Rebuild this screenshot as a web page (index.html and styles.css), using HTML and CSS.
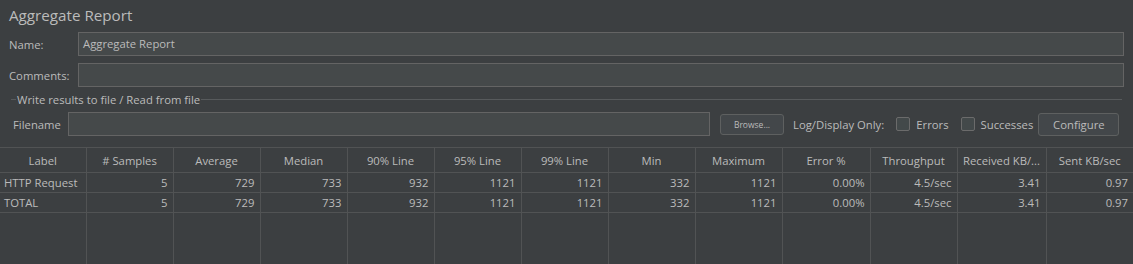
FILE: index.html
```html
<!DOCTYPE html>
<html lang="en">
<head>
  <meta charset="UTF-8" />
  <title>Aggregate Report</title>
  <link rel="stylesheet" href="styles.css">
</head>
<body>
  <div class="title">Aggregate Report</div>

  <div class="field-row">
    <label class="field-label">Name:</label>
    <div class="text-field">Aggregate Report</div>
  </div>
  <div class="field-row">
    <label class="field-label">Comments:</label>
    <div class="text-field"></div>
  </div>

  <div class="group">
    <div class="group-title"><span>Write results to file / Read from file</span></div>
    <div class="file-row">
      <label class="file-label">Filename</label>
      <div class="text-field file-field"></div>
      <button class="btn btn-small">Browse...</button>
      <span class="log-label">Log/Display Only:</span>
      <span class="check"></span><span class="check-label">Errors</span>
      <span class="check"></span><span class="check-label">Successes</span>
      <button class="btn btn-configure">Configure</button>
    </div>
  </div>

  <table class="report">
    <colgroup>
      <col style="width:86px"><col style="width:87px"><col style="width:87px"><col style="width:87px">
      <col style="width:87px"><col style="width:87px"><col style="width:87px"><col style="width:87px">
      <col style="width:87px"><col style="width:88px"><col style="width:87px"><col style="width:89px">
      <col style="width:87px">
    </colgroup>
    <thead>
      <tr>
        <th>Label</th><th># Samples</th><th>Average</th><th>Median</th><th>90% Line</th>
        <th>95% Line</th><th>99% Line</th><th>Min</th><th>Maximum</th><th>Error %</th>
        <th>Throughput</th><th>Received KB/...</th><th>Sent KB/sec</th>
      </tr>
    </thead>
    <tbody>
      <tr>
        <td class="name">HTTP Request</td><td>5</td><td>729</td><td>733</td><td>932</td>
        <td>1121</td><td>1121</td><td>332</td><td>1121</td><td>0.00%</td>
        <td>4.5/sec</td><td>3.41</td><td>0.97</td>
      </tr>
      <tr>
        <td class="name">TOTAL</td><td>5</td><td>729</td><td>733</td><td>932</td>
        <td>1121</td><td>1121</td><td>332</td><td>1121</td><td>0.00%</td>
        <td>4.5/sec</td><td>3.41</td><td>0.97</td>
      </tr>
      <tr class="filler">
        <td></td><td></td><td></td><td></td><td></td><td></td><td></td>
        <td></td><td></td><td></td><td></td><td></td><td></td>
      </tr>
    </tbody>
  </table>
</body>
</html>
```

FILE: styles.css
```css
* { margin: 0; padding: 0; box-sizing: border-box; }
html, body { height: 100%; }
body {
  background: #3c3f41;
  color: #bbbbbb;
  font-family: 'Open Sans', 'Noto Sans', sans-serif;
  font-size: 11.3px;
  overflow: hidden;
  white-space: nowrap;
}
.title {
  height: 32px;
  padding: 3px 0 0 9px;
  font-size: 15.2px;
  line-height: 24px;
}
.field-row {
  display: flex;
  align-items: center;
  height: 24px;
  margin: 0 9px 7px 9px;
}
.field-label { width: 69px; flex: none; }
.text-field {
  flex: 1;
  height: 24px;
  background: #45494a;
  border: 1px solid #646464;
  padding: 0 4px;
  line-height: 22px;
}
.group { margin: 0 11px 0 11px; }
.group-title {
  display: flex;
  align-items: center;
  height: 20px;
  margin-top: -5px;
}
.group-title::before {
  content: "";
  width: 5px;
  border-top: 1px solid #575a5c;
}
.group-title::after {
  content: "";
  flex: 1;
  border-top: 1px solid #575a5c;
}
.group-title span { padding: 0 1px; }
.file-row {
  display: flex;
  align-items: center;
  height: 24px;
  margin: 3px 0 11px 2px;
}
.file-row > * { flex-shrink: 0; }
.file-label { width: 55px; }
.file-field { flex: none; width: 642px; }
.btn {
  font-family: inherit;
  color: #bbbbbb;
  background: #43474a;
  border: 1px solid #5e6060;
  border-radius: 3px;
}
.btn-small {
  width: 64px;
  height: 21px;
  margin-left: 10px;
  font-size: 8.5px;
}
.log-label { margin-left: 9px; }
.check {
  width: 14px;
  height: 14px;
  margin-left: 12px;
  background: #43494a;
  border: 1px solid #6b6b6b;
  border-radius: 2px;
}
.check-label { margin-left: 6px; }
.btn-configure {
  width: 81px;
  height: 23px;
  margin-left: 5px;
  font-size: 11.3px;
}
.report {
  width: 1133px;
  height: 117px;
  table-layout: fixed;
  border-collapse: collapse;
  border-top: 1px solid #515354;
}
.report th {
  height: 25px;
  font-weight: normal;
  text-align: center;
  border-right: 1px solid #515354;
  border-bottom: 1px solid #515354;
  overflow: hidden;
}
.report td {
  height: 20px;
  text-align: right;
  padding: 0 5px 0 4px;
  border-right: 1px solid #515354;
  border-bottom: 1px solid #515354;
}
.report td.name { text-align: left; }
.report th:last-child, .report td:last-child { border-right: none; }
.report .filler td { height: auto; border-bottom: none; }
```
